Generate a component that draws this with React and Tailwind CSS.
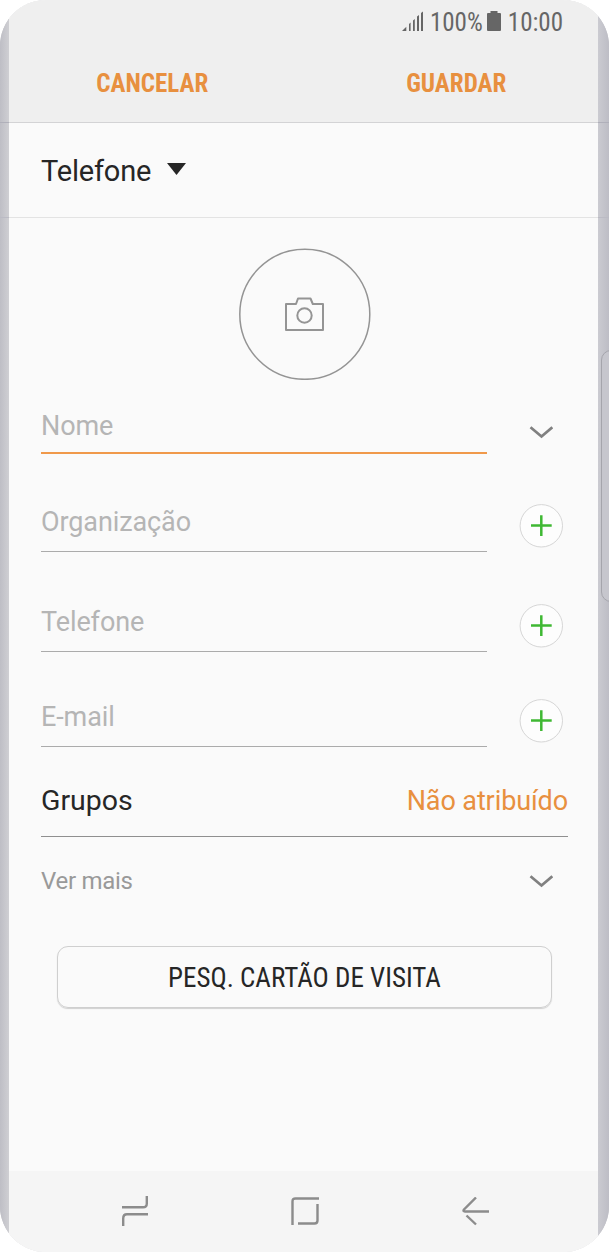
import { useState } from 'react';
import clsx from 'clsx';

const FIELDS = [
  { id: 'org', label: 'Organização', height: 'h-[98px]' },
  { id: 'phone', label: 'Telefone', height: 'h-[100px]' },
  { id: 'email', label: 'E-mail', height: 'h-[95px]' },
];

const condensed = "font-['Roboto_Condensed','Roboto',sans-serif] [font-stretch:75%]";

function ChevronDown() {
  return (
    <svg width="24" height="14" viewBox="0 0 24 14" fill="none" stroke="#808080" strokeWidth="2.7">
      <path d="M1.5 2.2 L12.5 11.5 L23.3 2.2" />
    </svg>
  );
}

function AddButton() {
  return (
    <button className="block w-[44px] h-[44px] shrink-0">
      <svg width="44" height="44" viewBox="0 0 44 44">
        <circle cx="22.3" cy="21.8" r="21.2" fill="#fdfdfd" stroke="#d6d6d6" />
        <path d="M22.3 11.3 V32 M12 21.6 H32.7" stroke="#3fb833" strokeWidth="2.5" />
      </svg>
    </button>
  );
}

function Field({ label, height, active, children }) {
  return (
    <div className={clsx('flex items-end justify-between', height)}>
      <div
        className={clsx(
          'w-[446px] text-[27px] leading-8 tracking-[-0.1px] text-[#b5b5b5]',
          active ? 'border-b-2 border-[#f0994a] pb-[10px]' : 'border-b border-[#ababab] pb-[13px]'
        )}
      >
        {label}
      </div>
      {children}
    </div>
  );
}

function Header() {
  return (
    <header className={clsx('h-[123px] shrink-0 bg-[#efefef] border-b border-[#d3d3d5] text-[25px]', condensed)}>
      {/* Status bar */}
      <div className="h-[43px] pr-[35px] flex items-center justify-end text-[#666] leading-none">
        <svg className="mr-[6px] -mt-[2px]" width="22" height="20" viewBox="0 0 22 20" fill="#666">
          <path d="M0 20 L4.3 15.7 V20 Z" />
          <path d="M7 13 L8.6 11.5 V20 H7 Z" />
          <path d="M11 9.5 L12.8 8 V20 H11 Z" />
          <path d="M15 5.5 L17 4 V20 H15 Z" />
          <path d="M19 2 L21 0.5 V20 H19 Z" />
        </svg>
        <span className="pt-px">100%</span>
        <svg className="ml-[4px] mr-[7px] -mt-[2px]" width="14" height="20" viewBox="0 0 14 20" fill="#666">
          <path d="M3.5 0 H10.5 V2 H13 Q14 2 14 3 V19 Q14 20 13 20 H1 Q0 20 0 19 V3 Q0 2 1 2 H3.5 Z" />
        </svg>
        <span className="pt-px">10:00</span>
      </div>
      {/* Actions */}
      <div className="h-[79px] pt-px grid grid-cols-2 text-[#e8903f] font-bold">
        <button className="pr-[8px] pt-px">CANCELAR</button>
        <button className="pl-[11px] pt-px">GUARDAR</button>
      </div>
    </header>
  );
}

function NavBar() {
  return (
    <nav className="h-[81px] shrink-0 bg-[#f5f5f5] flex items-center justify-between pb-px pl-[113px] pr-[109px]">
      <svg width="26" height="30" viewBox="0 0 26 30" fill="none" stroke="#8c8c8c" strokeWidth="2.4">
        <path d="M0 11.3 H21 Q24.8 11.3 24.8 7.5 V0" />
        <path d="M26 18.3 H5 Q1.2 18.3 1.2 22.5 V30" />
      </svg>
      <svg width="28" height="28" viewBox="0 0 28 28" fill="none" stroke="#8c8c8c" strokeWidth="2.4">
        <path d="M1.5 28 V4.5 Q1.5 1.5 4.5 1.5 H28" />
        <path d="M26.5 7 V23.5 Q26.5 26.5 23.5 26.5 H7" />
      </svg>
      <svg width="27" height="29" viewBox="0 0 27 29" fill="none" stroke="#8c8c8c" strokeWidth="2.4">
        <path d="M14 0.5 L2 12.5 Q0.6 14.5 3 14.5 H27" />
        <path d="M4.5 18.5 L14 27.5" />
      </svg>
    </nav>
  );
}

// Curved glass edge, the dividers run on across it
function Edge({ className }) {
  return (
    <div className={clsx('flex flex-col pt-[122px] gap-[94px]', className)}>
      <div className="h-px bg-[#b0b0ba]" />
      <div className="h-px bg-[#bbbbc4]" />
    </div>
  );
}

export default function App() {
  const [storage] = useState('Telefone');

  return (
    <div className="relative w-[609px] h-[1252px] flex overflow-hidden rounded-[46px] bg-[#c5c5ca] font-['Roboto',sans-serif]">
      <Edge className="w-[9px] shrink-0 bg-linear-to-r from-[#bebec5] to-[#cfcfd3]" />

      <div className="w-[589px] flex flex-col bg-[#fafafa]">
        <Header />

        {/* Storage selector */}
        <div className="h-[95px] shrink-0 border-b border-[#e3e3e3] px-8 flex items-center gap-4 text-[29px] tracking-[-0.2px] text-[#262626]">
          <span className="pt-[3px]">{storage}</span>
          <svg className="-mt-[3px]" width="19" height="12" viewBox="0 0 19 12" fill="#262626">
            <path d="M0 0 H19 L9.5 12 Z" />
          </svg>
        </div>

        <main className="flex-1 pl-8 pr-[30px] flex flex-col">
          <button className="mt-[30px] ml-[198px] w-[132px] h-[132px] shrink-0 rounded-full grid place-items-center">
            <svg width="132" height="132" viewBox="0 0 132 132" fill="none" stroke="#949494">
              <circle cx="65.8" cy="66.3" r="65" strokeWidth="1.5" />
              <g strokeWidth="2" strokeLinejoin="round">
                <path d="M47 56 H57 L59 50.5 H71.5 L73.8 56 H84 V82 H47 Z" />
                <circle cx="65.5" cy="67.5" r="7.2" />
              </g>
            </svg>
          </button>

          <Field label="Nome" height="h-[74px]" active>
            <div className="mr-[15px] mb-[15px]">
              <ChevronDown />
            </div>
          </Field>

          {FIELDS.map((field) => (
            <Field key={field.id} label={field.label} height={field.height}>
              <div className="mr-[5px] mb-1">
                <AddButton />
              </div>
            </Field>
          ))}

          <div className="h-[90px] border-b border-[#8f8f8f] pt-[19px] flex items-center justify-between">
            <span className="text-[28.5px] text-[#262626]">Grupos</span>
            <span className="text-[27px] tracking-[-0.1px] text-[#e8903f]">Não atribuído</span>
          </div>

          <div className="h-[88px] pr-[15px] flex items-center justify-between text-[24px] tracking-[-0.3px] text-[#999]">
            <span>Ver mais</span>
            <ChevronDown />
          </div>

          <button
            className={clsx(
              'mt-[21px] mx-4 h-[62px] rounded-[11px] border border-[#cfcfcf] shadow-[0_1px_1px_#d0d0d0] pt-0.5 text-[27px] text-[#262626]',
              condensed
            )}
          >
            PESQ. CARTÃO DE VISITA
          </button>
        </main>

        <NavBar />
      </div>

      <Edge className="flex-1 bg-linear-to-r from-[#cbcbd1] to-[#bdbdc5]" />

      {/* Edge panel handle */}
      <div className="absolute left-[601px] top-[350px] w-[20px] h-[252px] rounded-[10px] border border-[#a5a5ac] bg-[#c6c6cd]" />
    </div>
  );
}
